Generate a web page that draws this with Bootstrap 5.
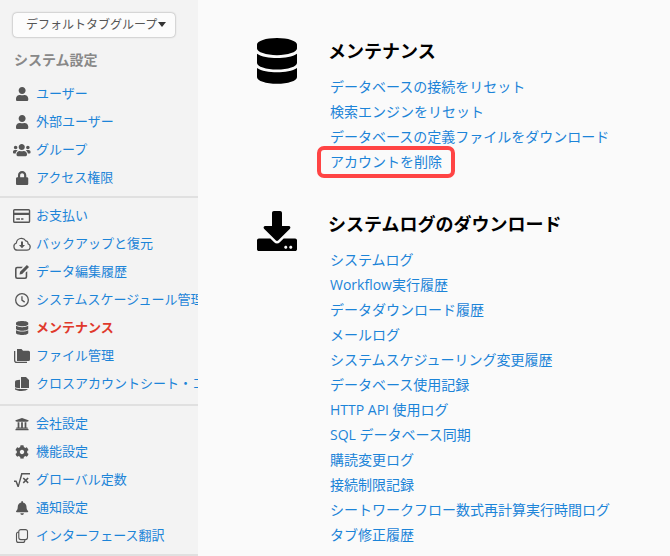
<!doctype html>
<html lang="ja"><head><meta charset="utf-8">
<link href="https://cdn.jsdelivr.net/npm/bootstrap@5.3.0/dist/css/bootstrap.min.css" rel="stylesheet">
<style>
html,body{height:100%;overflow:hidden}
body{font-family:"Open Sans","Noto Sans CJK JP",sans-serif;font-size:14px;background:#fafafa;color:#000}
.shell{width:670px;height:556px;overflow:hidden}
.side{width:198px;flex:none;background:#f3f3f3;overflow:hidden;height:556px}
.tabgroup{margin:13px 0 0 13px;width:162px;height:24px;font-size:12px;line-height:24px;padding:0 0 0 13px;background:#fcfcfc;border-radius:4px;box-shadow:0 0 2px rgba(0,0,0,.45);color:#555;white-space:nowrap}
.tabgroup i{display:inline-block;width:0;height:0;border:4px solid transparent;border-top:5px solid #333;border-bottom:0;margin-left:1px;vertical-align:2px}
.sidehead{font-size:14px;font-weight:700;color:#888;margin:12px 0 0 14px;line-height:22px;height:22px}
.sideitem{display:flex;align-items:center;height:28px;white-space:nowrap;font-size:13px}
.sideicon{width:36px;flex:none;display:flex;justify-content:center;padding:0 0 0 8px;margin-right:0}
.sideicon svg{height:14px;width:auto;fill:#555;overflow:visible}
.sideitem a{color:#1c84d8;text-decoration:none}
.sideitem a.now{color:#e0392b;font-weight:700}
.rule{height:2px;background:#e0e0e0;margin:4px 0}
.rule-wide{margin-top:6px}
.items-top{margin-top:9px}
.mainpane{padding:38px 0 0 59px;flex:1}
.block{display:flex}
.block-first{height:173px}
.bigicon{width:40px;flex:none;margin-right:31px}
.bigicon svg{width:40px;display:block;fill:#000}
.blocktitle{font-size:18px;font-weight:700;line-height:26px;margin:0 0 10px;color:#000}
.loglink{display:block;height:25px;line-height:25px;padding-left:2px;color:#1c84d8;text-decoration:none;white-space:nowrap;font-size:14px}
.flagged{display:inline-block;position:relative}
.flagged::after{content:"";position:absolute;left:-13px;right:-13px;top:-3px;bottom:-4px;border:4px solid #f44;border-radius:7px}
</style></head><body>
<div class="d-flex shell">
<nav class="side">
<div class="tabgroup">デフォルトタブグループ<i></i></div>
<div class="sidehead">システム設定</div>
<div class="items-top">
<div class="sideitem"><span class="sideicon"><svg viewBox="0 0 448 512"><path d="M224 256c70.7 0 128-57.3 128-128S294.7 0 224 0 96 57.3 96 128s57.3 128 128 128zm89.6 32h-16.7c-22.2 10.2-46.9 16-72.9 16s-50.6-5.8-72.9-16h-16.7C60.2 288 0 348.2 0 422.4V464c0 26.5 21.5 48 48 48h352c26.5 0 48-21.5 48-48v-41.6c0-74.2-60.2-134.4-134.4-134.4z"/></svg></span><a href="#">ユーザー</a></div>
<div class="sideitem"><span class="sideicon"><svg viewBox="0 0 448 512"><path d="M224 256c70.7 0 128-57.3 128-128S294.7 0 224 0 96 57.3 96 128s57.3 128 128 128zm89.6 32h-16.7c-22.2 10.2-46.9 16-72.9 16s-50.6-5.8-72.9-16h-16.7C60.2 288 0 348.2 0 422.4V464c0 26.5 21.5 48 48 48h352c26.5 0 48-21.5 48-48v-41.6c0-74.2-60.2-134.4-134.4-134.4z"/></svg></span><a href="#">外部ユーザー</a></div>
<div class="sideitem"><span class="sideicon"><svg viewBox="0 0 640 512"><path d="M96 224c35.3 0 64-28.7 64-64s-28.7-64-64-64-64 28.7-64 64 28.7 64 64 64zm448 0c35.3 0 64-28.7 64-64s-28.7-64-64-64-64 28.7-64 64 28.7 64 64 64zm32 32h-64c-17.6 0-33.5 7.1-45.1 18.6 40.3 22.1 68.9 62 75.1 109.4h66c17.7 0 32-14.3 32-32v-32c0-35.3-28.7-64-64-64zm-256 0c61.9 0 112-50.1 112-112S381.9 32 320 32 208 82.1 208 144s50.1 112 112 112zm76.8 32h-8.3c-20.8 10-43.9 16-68.5 16s-47.6-6-68.5-16h-8.3C179.6 288 128 339.6 128 403.2V432c0 26.5 21.5 48 48 48h288c26.5 0 48-21.5 48-48v-28.8c0-63.6-51.6-115.2-115.2-115.2zm-223.7-13.4C161.5 263.1 145.6 256 128 256H64c-35.3 0-64 28.7-64 64v32c0 17.7 14.3 32 32 32h65.9c6.3-47.4 34.9-87.3 75.2-109.4z"/></svg></span><a href="#">グループ</a></div>
<div class="sideitem"><span class="sideicon"><svg viewBox="0 0 448 512"><path d="M400 224h-24v-72C376 68.2 307.8 0 224 0S72 68.2 72 152v72H48c-26.5 0-48 21.5-48 48v192c0 26.5 21.5 48 48 48h352c26.5 0 48-21.5 48-48V272c0-26.5-21.5-48-48-48zm-104 0H152v-72c0-39.7 32.3-72 72-72s72 32.3 72 72v72z"/></svg></span><a href="#">アクセス権限</a></div>
</div>
<div class="rule"></div>
<div class="sideitem"><span class="sideicon"><svg viewBox="0 0 16 13"><path fill-rule="evenodd" d="M1.5 0h13A1.500 1.500 0 0 1 16 1.500v10a1.500 1.500 0 0 1-1.500 1.500h-13A1.500 1.500 0 0 1 0 11.500v-10A1.500 1.500 0 0 1 1.500 0zM1.300 1.300v2.200h13.400V1.300zm0 4.200v6.200h13.400V5.500zM3 8.700h3.500v1.200H3zm4.500 0h2.200v1.200H7.500z"/></svg></span><a href="#">お支払い</a></div>
<div class="sideitem"><span class="sideicon"><svg viewBox="0 0 18 14"><path fill="none" stroke="#555" stroke-width="1.200" d="M4.500 13.200A3.700 3.700 0 0 1 3.400 6a5 5 0 0 1 9.300-2.200 2.500 2.500 0 0 1 2.300 3A3.300 3.300 0 0 1 13.800 13.200z"/><path d="M8 4.500h2v3.500h2L9 11.200 6 8h2z"/></svg></span><a href="#">バックアップと復元</a></div>
<div class="sideitem"><span class="sideicon"><svg viewBox="0 0 16 16"><path d="M13.600 0l2.400 2.400-7.800 7.800-3 .6.600-3z"/><path d="M2.500 2H9L7.300 3.800H2.800a1 1 0 0 0-1 1v8.400a1 1 0 0 0 1 1h8.400a1 1 0 0 0 1-1V8.700L14 7v6.500a2.500 2.500 0 0 1-2.500 2.500h-9A2.500 2.500 0 0 1 0 13.500v-9A2.500 2.500 0 0 1 2.500 2z"/></svg></span><a href="#">データ編集履歴</a></div>
<div class="sideitem"><span class="sideicon"><svg viewBox="0 0 16 16"><path fill-rule="evenodd" d="M8 0a8 8 0 1 1 0 16A8 8 0 0 1 8 0zm0 1.500a6.500 6.500 0 1 0 0 13 6.500 6.500 0 0 0 0-13zM7.200 3.800h1.500v4l2.800 2-.9 1.200-3.400-2.500z"/></svg></span><a href="#">システムスケージュール管理</a></div>
<div class="sideitem"><span class="sideicon"><svg viewBox="0 0 448 512"><path d="M448 73.143v45.714C448 159.143 347.667 192 224 192S0 159.143 0 118.857V73.143C0 32.857 100.333 0 224 0s224 32.857 224 73.143zM448 176v102.857C448 319.143 347.667 352 224 352S0 319.143 0 278.857V176c48.125 33.143 136.208 48.572 224 48.572S399.874 209.143 448 176zm0 160v102.857C448 479.143 347.667 512 224 512S0 479.143 0 438.857V336c48.125 33.143 136.208 48.572 224 48.572S399.874 369.143 448 336z"/></svg></span><a href="#" class="now">メンテナンス</a></div>
<div class="sideitem"><span class="sideicon"><svg viewBox="0 0 16 14"><path d="M3 0h4.500l1.500 1.800h5.500A1.500 1.500 0 0 1 16 3.300v7.200a1.500 1.500 0 0 1-1.500 1.500H3z"/><path d="M0 2h1.300v9.200A1.500 1.500 0 0 0 2.800 12.700H13V14H2.800A2.800 2.800 0 0 1 0 11.200z"/></svg></span><a href="#">ファイル管理</a></div>
<div class="sideitem"><span class="sideicon"><svg viewBox="0 0 14 14"><path d="M6 0h5l3 3v8H6z"/><path d="M0 4.500C0 3.500 2 2.800 5 2.800v8.400c-3 0-5-.5-5-1.200z"/><path d="M0 11c1 .7 3 1 5 1h8c-1 1.300-3.500 2-6.500 2S1 13.300 0 12.500z"/></svg></span><a href="#">クロスアカウントシート・コピー</a></div>
<div class="rule rule-wide"></div>
<div class="sideitem"><span class="sideicon"><svg viewBox="0 0 512 512"><path d="M496 128v16a8 8 0 0 1-8 8h-24v12c0 6.627-5.373 12-12 12H60c-6.627 0-12-5.373-12-12v-12H24a8 8 0 0 1-8-8v-16a8 8 0 0 1 4.941-7.392l232-88a7.996 7.996 0 0 1 6.118 0l232 88A8 8 0 0 1 496 128zm-24 304H40c-13.255 0-24 10.745-24 24v16a8 8 0 0 0 8 8h464a8 8 0 0 0 8-8v-16c0-13.255-10.745-24-24-24zM96 192v192H60c-6.627 0-12 5.373-12 12v20h416v-20c0-6.627-5.373-12-12-12h-36V192h-64v192h-64V192h-64v192h-64V192H96z"/></svg></span><a href="#">会社設定</a></div>
<div class="sideitem"><span class="sideicon"><svg viewBox="0 0 512 512"><path d="M487.400 315.700l-42.600-24.600c4.300-23.200 4.300-47 0-70.200l42.600-24.600c4.900-2.800 7.100-8.600 5.500-14-11.100-35.600-30-67.800-54.700-94.600-3.800-4.100-10-5.100-14.800-2.300L380.800 110c-17.900-15.400-38.500-27.300-60.800-35.100V25.800c0-5.600-3.900-10.500-9.400-11.700-36.700-8.200-74.300-7.800-109.200 0-5.500 1.200-9.400 6.100-9.400 11.700V75c-22.200 7.900-42.800 19.800-60.800 35.100L88.700 85.500c-4.900-2.800-11-1.900-14.800 2.300-24.700 26.700-43.600 58.900-54.700 94.600-1.700 5.400.6 11.200 5.500 14L67.300 221c-4.300 23.200-4.300 47 0 70.200l-42.600 24.600c-4.900 2.800-7.100 8.600-5.500 14 11.100 35.600 30 67.800 54.700 94.600 3.800 4.100 10 5.100 14.800 2.300l42.600-24.600c17.900 15.400 38.500 27.300 60.800 35.100v49.200c0 5.600 3.900 10.500 9.400 11.700 36.700 8.200 74.300 7.800 109.200 0 5.500-1.200 9.400-6.100 9.400-11.700v-49.200c22.200-7.900 42.800-19.800 60.800-35.100l42.600 24.600c4.900 2.800 11 1.900 14.800-2.300 24.700-26.700 43.600-58.900 54.700-94.600 1.500-5.500-.7-11.300-5.600-14.100zM256 336c-44.100 0-80-35.900-80-80s35.900-80 80-80 80 35.900 80 80-35.900 80-80 80z"/></svg></span><a href="#">機能設定</a></div>
<div class="sideitem"><span class="sideicon"><svg viewBox="0 0 16 14"><path d="M0 7.500h2.500l1.700 4L7.200 0H16v1.500H8.400L4.800 14H3.500L1.600 9H0z"/><path d="M8.700 5.500l1.100-1.100 1.900 1.900 1.900-1.900 1.100 1.100-1.900 1.900 1.900 1.900-1.100 1.100-1.900-1.900-1.900 1.900-1.100-1.100 1.900-1.900z"/></svg></span><a href="#">グローバル定数</a></div>
<div class="sideitem"><span class="sideicon"><svg viewBox="0 0 448 512"><path d="M224 512c35.320 0 63.970-28.650 63.970-64H160.030c0 35.350 28.650 64 63.970 64zm215.390-149.710c-19.320-20.760-55.470-51.990-55.470-154.290 0-77.700-54.480-139.900-127.940-155.160V32c0-17.670-14.320-32-31.980-32s-31.980 14.330-31.980 32v20.840C118.560 68.100 64.080 130.300 64.080 208c0 102.300-36.150 133.530-55.470 154.290-6 6.450-8.660 14.160-8.610 21.710.11 16.400 12.980 32 32.100 32h383.800c19.120 0 32-15.600 32.100-32 .05-7.550-2.610-15.270-8.610-21.710z"/></svg></span><a href="#">通知設定</a></div>
<div class="sideitem"><span class="sideicon"><svg viewBox="0 0 12 14"><path fill="none" stroke="#555" stroke-width="1.100" d="M4.800.6h4.700a2 2 0 0 1 2 2v6a2 2 0 0 1-2 2H4.800a2 2 0 0 1-2-2v-6a2 2 0 0 1 2-2zM2.800 3H2.500a2 2 0 0 0-2 2v6.400a2 2 0 0 0 2 2h4.300a2 2 0 0 0 2-2v-.9"/></svg></span><a href="#">インターフェース翻訳</a></div>
<div class="rule"></div>
</nav>
<main class="mainpane">
<section class="block block-first">
<div class="bigicon"><svg viewBox="0 0 448 512"><path d="M448 73.143v45.714C448 159.143 347.667 192 224 192S0 159.143 0 118.857V73.143C0 32.857 100.333 0 224 0s224 32.857 224 73.143zM448 176v102.857C448 319.143 347.667 352 224 352S0 319.143 0 278.857V176c48.125 33.143 136.208 48.572 224 48.572S399.874 209.143 448 176zm0 160v102.857C448 479.143 347.667 512 224 512S0 479.143 0 438.857V336c48.125 33.143 136.208 48.572 224 48.572S399.874 369.143 448 336z"/></svg></div>
<div><h2 class="blocktitle">メンテナンス</h2>
<a class="loglink" href="#">データベースの接続をリセット</a>
<a class="loglink" href="#">検索エンジンをリセット</a>
<a class="loglink" href="#">データベースの定義ファイルをダウンロード</a>
<a class="loglink" href="#"><span class="flagged">アカウントを削除</span></a></div>
</section>
<section class="block">
<div class="bigicon"><svg viewBox="0 0 512 512"><path d="M216 0h80c13.300 0 24 10.700 24 24v168h87.700c17.800 0 26.700 21.500 14.100 34.100L269.700 378.300c-7.500 7.500-19.800 7.500-27.300 0L90.100 226.100c-12.600-12.600-3.700-34.100 14.100-34.100H192V24c0-13.300 10.700-24 24-24zm296 376v112c0 13.300-10.700 24-24 24H24c-13.300 0-24-10.700-24-24V376c0-13.300 10.700-24 24-24h146.700l49 49c20.100 20.100 52.500 20.100 72.600 0l49-49H488c13.300 0 24 10.700 24 24zm-124 88c0-11-9-20-20-20s-20 9-20 20 9 20 20 20 20-9 20-20zm64 0c0-11-9-20-20-20s-20 9-20 20 9 20 20 20 20-9 20-20z"/></svg></div>
<div><h2 class="blocktitle">システムログのダウンロード</h2>
<a class="loglink" href="#">システムログ</a>
<a class="loglink" href="#">Workflow実行履歴</a>
<a class="loglink" href="#">データダウンロード履歴</a>
<a class="loglink" href="#">メールログ</a>
<a class="loglink" href="#">システムスケジューリング変更履歴</a>
<a class="loglink" href="#">データベース使用記録</a>
<a class="loglink" href="#">HTTP API 使用ログ</a>
<a class="loglink" href="#">SQL データベース同期</a>
<a class="loglink" href="#">購読変更ログ</a>
<a class="loglink" href="#">接続制限記録</a>
<a class="loglink" href="#">シートワークフロー数式再計算実行時間ログ</a>
<a class="loglink" href="#">タブ修正履歴</a></div>
</section>
</main>
</div>
<script src="https://cdn.jsdelivr.net/npm/bootstrap@5.3.0/dist/js/bootstrap.bundle.min.js"></script>
</body></html>
